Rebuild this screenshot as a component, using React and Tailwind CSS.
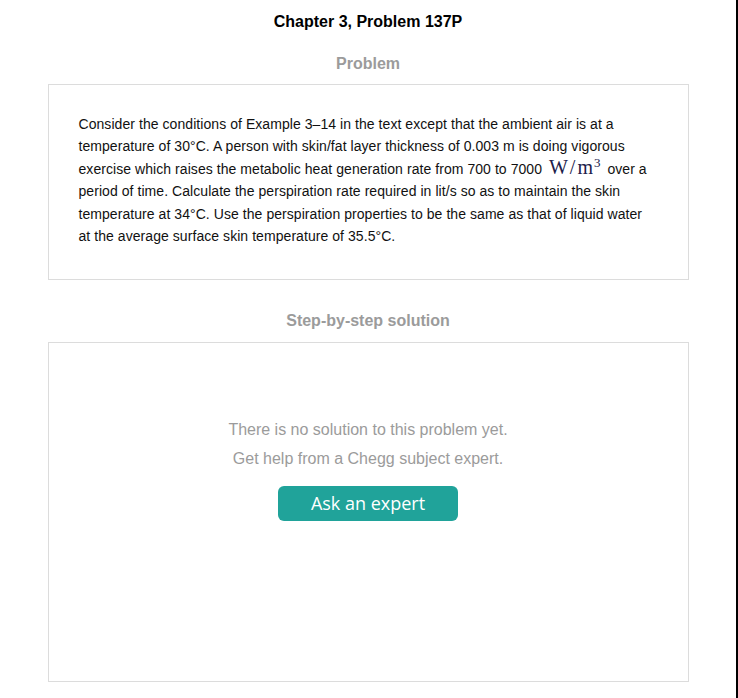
import React from 'react'

const BODY = { fontFamily: '"Liberation Sans", Arial, sans-serif' }

export default function App() {
  return (
    <div className="w-[738px] min-h-[698px] bg-white border-r-2 border-black text-black" style={BODY}>
      <h1 className="pt-[13px] text-center text-[16px] leading-[18px] font-bold text-black">
        Chapter 3, Problem 137P
      </h1>

      {/* Problem */}
      <h2 className="mt-[24px] text-center text-[16px] leading-[18px] font-bold text-[#9b9b9b]">Problem</h2>
      <div className="mt-[11px] mx-auto w-[641px] border border-[#dcdcdc] pl-[30px] pr-[37px] pt-[28px] pb-[32px]">
        <p className="text-[14px] leading-[22.4px] tracking-[0.06px] text-[#111]">
          Consider the conditions of Example 3–14 in the text except that the ambient air is at a temperature of 30°C. A
          person with skin/fat layer thickness of 0.003 m is doing vigorous exercise which raises the metabolic heat
          generation rate from 700 to 7000{' '}
          <span
            className="inline-block mx-[3px] text-[20px] leading-[16px] tracking-normal text-[#20204a]"
            style={{ fontFamily: '"Liberation Serif", "Times New Roman", serif' }}
          >
            <span className="tracking-[2px]">W/</span>m<span className="relative -top-[7px] ml-[1px] text-[13px]">3</span>
          </span>{' '}
          over a period of time. Calculate the perspiration rate required in lit/s so as to maintain the skin temperature
          at 34°C. Use the perspiration properties to be the same as that of liquid water at the average surface skin
          temperature of 35.5°C.
        </p>
      </div>

      {/* Solution */}
      <h2 className="mt-[32px] text-center text-[16px] leading-[18px] font-bold text-[#9b9b9b]">Step-by-step solution</h2>
      <div className="mt-[12px] mx-auto w-[641px] h-[340px] border border-[#dcdcdc] flex flex-col items-center pt-[75px]">
        <p className="text-[16px] leading-[24px] text-[#9b9b9b]">There is no solution to this problem yet.</p>
        <p className="mt-[5px] text-[16px] leading-[24px] text-[#9b9b9b]">Get help from a Chegg subject expert.</p>
        <button
          className="mt-[15px] w-[180px] h-[35px] rounded-[6px] bg-[#20a39a] text-white text-[18px] leading-[35px]"
          style={{ fontFamily: '"Open Sans", "DejaVu Sans", sans-serif' }}
        >
          Ask an expert
        </button>
      </div>
    </div>
  )
}
